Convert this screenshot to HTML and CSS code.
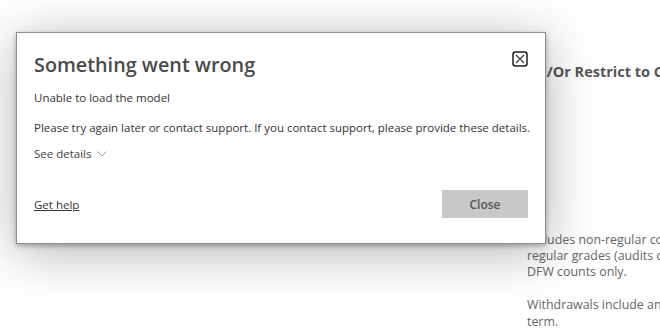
FILE: index.html
```html
<!DOCTYPE html>
<html lang="en">
<head>
  <meta charset="UTF-8">
  <title>Something went wrong</title>
  <link rel="stylesheet" href="styles.css">
</head>
<body>
  <!-- Report page behind the dialog -->
  <div class="report">
    <h2 class="report-title">And/Or Restrict to Courses</h2>
    <div class="report-notes">
      <p>Includes non-regular courses and non-<br>regular grades (audits credit, etc.)<br>DFW counts only.</p>
      <p>Withdrawals include any drops after the<br>term.</p>
    </div>
  </div>

  <!-- Error dialog -->
  <div class="dialog" role="dialog">
    <div class="dialog-header">
      <h1 class="dialog-title">Something went wrong</h1>
      <button class="close-icon" aria-label="Close">
        <svg width="16" height="16" viewBox="0 0 16 16">
          <rect x="1" y="1" width="14" height="14" rx="2.5" fill="none" stroke="#1e1e1e" stroke-width="1.5"/>
          <path d="M4 4 L12 12 M12 4 L4 12" stroke="#3a3a3a" stroke-width="1.1" fill="none"/>
        </svg>
      </button>
    </div>
    <p class="dialog-text">Unable to load the model</p>
    <p class="dialog-text spaced">Please try again later or contact support. If you contact support, please provide these details.</p>
    <div class="details">
      See details
      <svg width="10" height="6" viewBox="0 0 10 6">
        <path d="M0.5 0.5 L5 5 L9.5 0.5" stroke="#9a9a9a" stroke-width="1" fill="none"/>
      </svg>
    </div>
    <div class="dialog-footer">
      <a class="help-link" href="#">Get help</a>
      <button class="close-button">Close</button>
    </div>
  </div>
</body>
</html>
```

FILE: styles.css
```css
/* Основа страницы */
html, body {
  overflow: hidden;
}

body {
  margin: 0;
  height: 330px;
  background: #fff;
  font-family: "Open Sans", "Noto Sans", sans-serif;
  position: relative;
}

/* Отчёт за диалогом */
.report {
  width: 660px;
  overflow: hidden;
  padding: 62px 0 0 518px;
  box-sizing: border-box;
  color: #666;
}

.report-title {
  margin: 0;
  font-size: 14.5px;
  font-weight: 700;
  color: #555;
  white-space: nowrap;
  line-height: 20px;
}

.report-notes {
  padding: 150px 0 0 9px;
  font-size: 12.4px;
  line-height: 16px;
  white-space: nowrap;
}

.report-notes p {
  margin: 0;
}

.report-notes p + p {
  margin-top: 16px;
  line-height: 17px;
}

/* Диалог */
.dialog {
  position: absolute;
  left: 16px;
  top: 32px;
  width: 530px;
  height: 212px;
  background: #fff;
  border: 1px solid #8c8c8c;
  box-shadow: 0 2px 5px rgba(0, 0, 0, 0.3), 0 8px 50px rgba(0, 0, 0, 0.3);
  padding: 18px 17px 25px 17px;
  box-sizing: border-box;
  display: flex;
  flex-direction: column;
  color: #333;
}

.dialog-header {
  display: flex;
  justify-content: space-between;
  align-items: flex-start;
}

.dialog-title {
  margin: 0;
  font-size: 19.8px;
  font-weight: 600;
  line-height: 28px;
  color: #4a4a4a;
}

.close-icon {
  border: none;
  background: none;
  padding: 0;
  width: 16px;
  height: 16px;
}

.close-icon svg {
  display: block;
}

.dialog-text {
  margin: 11px 0 0;
  font-size: 11.5px;
  line-height: 16px;
  color: #333;
  white-space: nowrap;
}

.dialog-text.spaced {
  margin-top: 14px;
}

.details {
  margin-top: 10px;
  font-size: 11.5px;
  line-height: 16px;
  color: #444;
  display: flex;
  align-items: center;
  gap: 6px;
}

.dialog-footer {
  margin-top: auto;
  display: flex;
  justify-content: space-between;
  align-items: center;
}

.help-link {
  font-size: 11.5px;
  color: #333;
  text-decoration: underline;
}

.close-button {
  width: 86px;
  height: 28px;
  border: none;
  background: #c8c8c8;
  color: #555;
  font-family: "Open Sans", "Noto Sans", sans-serif;
  font-size: 12px;
  font-weight: 600;
}
```
